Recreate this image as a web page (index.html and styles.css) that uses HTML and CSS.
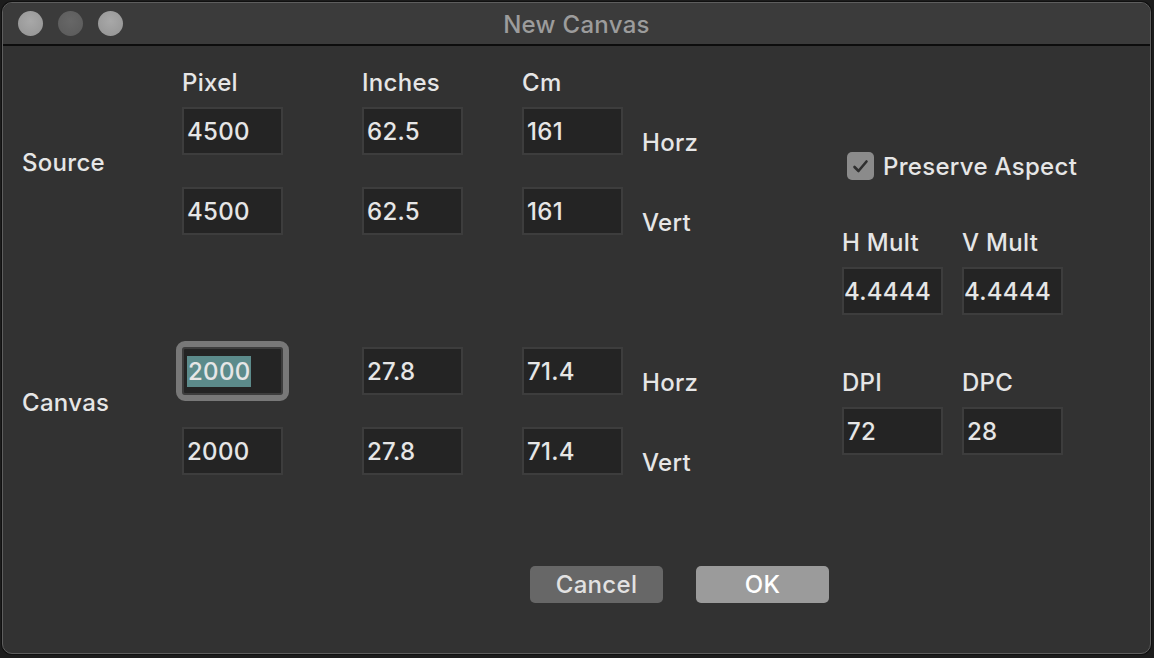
FILE: index.html
```html
<!DOCTYPE html>
<html>
<head>
<meta charset="utf-8">
<title>New Canvas</title>
<link rel="stylesheet" href="styles.css">
</head>
<body>
<div class="window">
  <div class="titlebar">
    <div class="lights">
      <span class="light"></span>
      <span class="light dim"></span>
      <span class="light"></span>
    </div>
    <div class="title">New Canvas</div>
    <div></div>
  </div>
  <div class="content">
    <div class="main">
      <div class="grid">
        <div class="head c2">Pixel</div>
        <div class="head c3">Inches</div>
        <div class="head c4">Cm</div>

        <div class="rowlabel src">Source</div>
        <div class="field c2 r3">4500</div>
        <div class="field c3 r3">62.5</div>
        <div class="field c4 r3">161</div>
        <div class="unit r3">Horz</div>
        <div class="field c2 r5">4500</div>
        <div class="field c3 r5">62.5</div>
        <div class="field c4 r5">161</div>
        <div class="unit r5">Vert</div>

        <div class="rowlabel cnv">Canvas</div>
        <div class="field c2 r7 focused"><span class="sel">2000</span></div>
        <div class="field c3 r7">27.8</div>
        <div class="field c4 r7">71.4</div>
        <div class="unit r7">Horz</div>
        <div class="field c2 r9">2000</div>
        <div class="field c3 r9">27.8</div>
        <div class="field c4 r9">71.4</div>
        <div class="unit r9">Vert</div>
      </div>
      <div class="side">
        <div class="check">
          <span class="box"><svg width="19" height="19" viewBox="0 0 19 19"><path d="M3.5 10 L7.5 14 L15.5 4.5" fill="none" stroke="#2f2f2f" stroke-width="2.6" stroke-linecap="round" stroke-linejoin="round"/></svg></span>
          <span>Preserve Aspect</span>
        </div>
        <div class="pair mult">
          <div class="slabel">H Mult</div>
          <div class="slabel">V Mult</div>
          <div class="field scroll"><span>44.4444</span></div>
          <div class="field scroll"><span>44.4444</span></div>
        </div>
        <div class="pair dpi">
          <div class="slabel">DPI</div>
          <div class="slabel">DPC</div>
          <div class="field">72</div>
          <div class="field">28</div>
        </div>
      </div>
    </div>
    <div class="buttons">
      <div class="btn cancel">Cancel</div>
      <div class="btn ok">OK</div>
    </div>
  </div>
</div>
</body>
</html>
```

FILE: styles.css
```css
* { box-sizing: border-box; }
html, body {
  margin: 0;
  padding: 0;
  background: #1c1c1c;
  width: 1154px;
  height: 658px;
  overflow: hidden;
}
body {
  font-family: Inter, "Liberation Sans", sans-serif;
  font-size: 24px;
  font-weight: 500;
  letter-spacing: 0.3px;
  color: #e6e6e6;
}
.window {
  margin: 2px 3px 0 2px;
  width: 1149px;
  height: 652px;
  border: 1px solid #5e5e5e;
  border-radius: 10px;
  background: #323232;
  overflow: hidden;
  display: flex;
  flex-direction: column;
  box-shadow: 0 0 0 1px #101010;
}
.titlebar {
  height: 43px;
  background: #3b3b3b;
  border-bottom: 2px solid #0d0d0d;
  display: grid;
  grid-template-columns: 1fr auto 1fr;
  align-items: center;
}
.lights {
  display: flex;
  gap: 15px;
  padding-left: 15px;
}
.light {
  width: 25px;
  height: 25px;
  border-radius: 50%;
  background: radial-gradient(circle at 50% 40%, #a8a8a8, #939393);
}
.light.dim {
  background: radial-gradient(circle at 50% 40%, #676767, #5a5a5a);
}
.title {
  color: #9c9c9c;
  padding-top: 2px;
}
.content {
  padding: 25px 0 0 19px;
}
.main {
  display: flex;
}
.grid {
  display: grid;
  grid-template-columns: 160px 180px 160px 120px 200px;
  grid-template-rows: 24px 12px 48px 32px 48px 112px 48px 32px 48px;
}
.head {
  grid-row: 1;
  line-height: 24px;
}
.c2 { grid-column: 2; }
.c3 { grid-column: 3; }
.c4 { grid-column: 4; }
.r3 { grid-row: 3; }
.r5 { grid-row: 5; }
.r7 { grid-row: 7; }
.r9 { grid-row: 9; }
.field {
  width: 101px;
  height: 48px;
  background: #242424;
  border: 2px solid #3d3d3d;
  display: flex;
  align-items: center;
  padding-left: 3px;
  white-space: nowrap;
  overflow: hidden;
}
.field.focused {
  outline: 6px solid #787878;
  border-radius: 3px;
  overflow: visible;
}
.sel {
  background: #5c8b8b;
  line-height: 31px;
  padding: 0 1px;
}
.unit {
  grid-column: 5;
  align-self: end;
  line-height: 28px;
  margin-bottom: -2px;
}
.rowlabel {
  grid-column: 1;
  align-self: center;
  line-height: 28px;
  margin-bottom: 16px;
}
.rowlabel.src { grid-row: 3 / 6; }
.rowlabel.cnv { grid-row: 7 / 10; }

.side {
  display: flex;
  flex-direction: column;
  padding-top: 81px;
}
.check {
  display: flex;
  align-items: center;
  gap: 9px;
  padding-left: 5px;
  height: 28px;
}
.box {
  width: 27px;
  height: 28px;
  border-radius: 5px;
  background: #8b8b8b;
  display: flex;
  align-items: center;
  justify-content: center;
}
.pair {
  display: grid;
  grid-template-columns: 120px 120px;
  grid-template-rows: 28px 48px;
  row-gap: 10px;
}
.mult { margin-top: 49px; }
.dpi { margin-top: 54px; }
.slabel { line-height: 28px; }
.field.scroll {
  justify-content: flex-end;
  padding-left: 0;
  padding-right: 10px;
}
.buttons {
  display: flex;
  gap: 33px;
  margin-top: 91px;
  padding-left: 508px;
}
.btn {
  width: 133px;
  height: 37px;
  border-radius: 5px;
  display: flex;
  align-items: center;
  justify-content: center;
}
.cancel {
  background: #676767;
  color: #e2e2e2;
}
.ok {
  background: #9b9b9b;
  color: #ffffff;
}
```
